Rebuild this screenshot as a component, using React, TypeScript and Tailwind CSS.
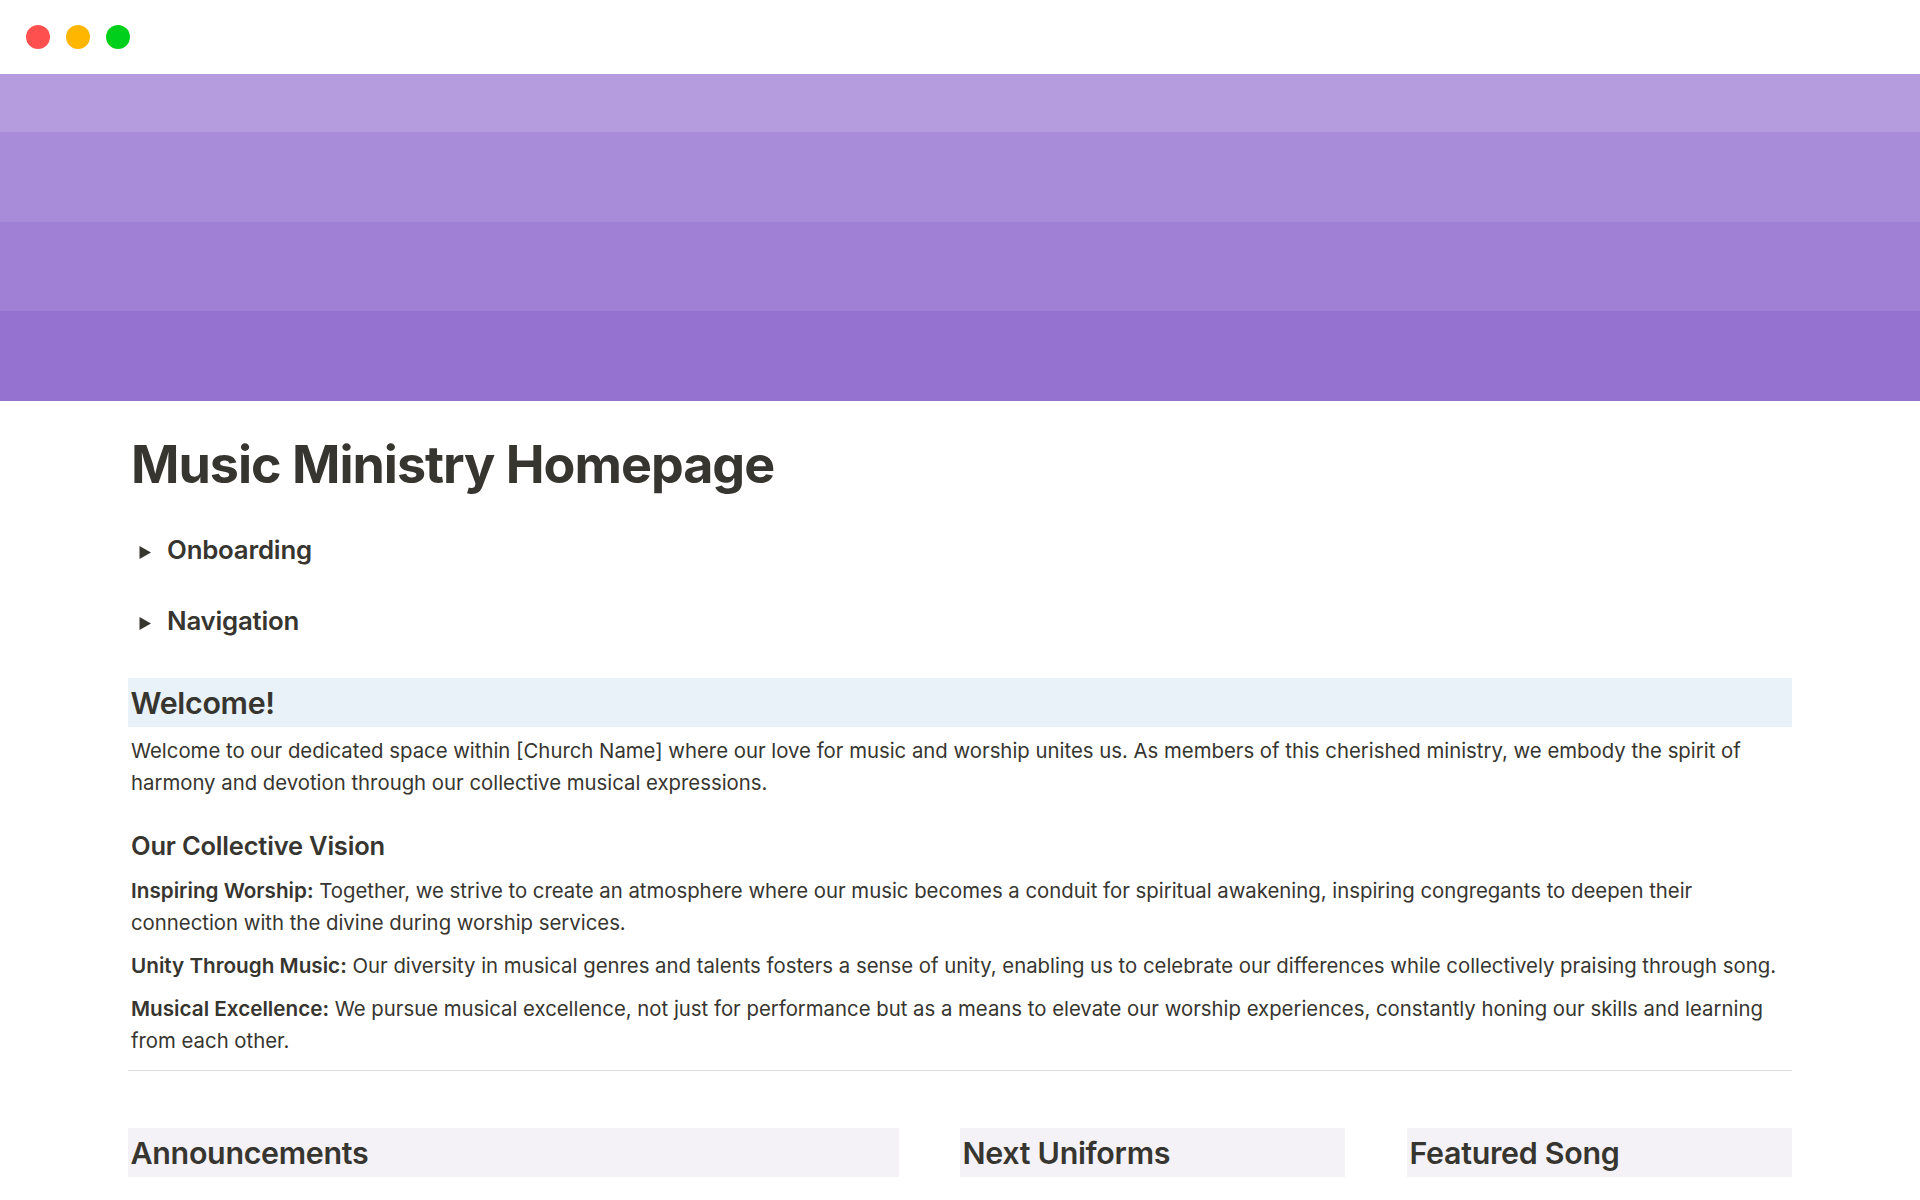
function Toggle({ label }: { label: string }) {
  return (
    <div className="flex items-center h-[36px]">
      <svg className="ml-[11px] mt-[8px] h-[13px] w-[12px] text-[#37352f]" viewBox="0 0 12 13" fill="currentColor">
        <path d="M0.5 0 L12 6.5 L0.5 13 Z" />
      </svg>
      <span className="ml-[16px] pt-[4px] text-[25.8px] font-semibold tracking-[-0.2px]">{label}</span>
    </div>
  );
}

function ColumnHeading({ title, className }: { title: string; className: string }) {
  return (
    <div className={`h-[49px] bg-[#f4f2f7] pl-[2.5px] pt-[2px] flex items-center text-[30.4px] font-semibold tracking-[-0.3px] ${className}`}>
      {title}
    </div>
  );
}

export default function App() {
  return (
    <div className="h-[1200px] overflow-hidden bg-white text-[#37352f] font-['Inter',sans-serif]">
      {/* Window dots */}
      <div className="h-[74px] flex items-center gap-4 pl-[26px]">
        <span className="h-6 w-6 rounded-full bg-[#ff5050]" />
        <span className="h-6 w-6 rounded-full bg-[#ffb600]" />
        <span className="h-6 w-6 rounded-full bg-[#00d01c]" />
      </div>

      {/* Banner */}
      <div>
        <div className="h-[58px] bg-[#b49cdf]" />
        <div className="h-[90px] bg-[#a88cd9]" />
        <div className="h-[89px] bg-[#a080d5]" />
        <div className="h-[90px] bg-[#9672d0]" />
      </div>

      <div className="px-[128px]">
        <h1 className="mt-[28px] pl-[3px] text-[52px] leading-[72px] font-bold tracking-[-1px]">
          Music Ministry Homepage
        </h1>

        <div className="mt-[29px] flex flex-col gap-[35px]">
          <Toggle label="Onboarding" />
          <Toggle label="Navigation" />
        </div>

        <div className="mt-[41px] h-[49px] bg-[#e9f2f8] pl-[2.5px] pt-[2px] flex items-center text-[30.4px] font-semibold tracking-[-0.3px]">
          Welcome!
        </div>

        <div className="pl-[3px] text-[20.34px] leading-[32px]">
          <p className="mt-[8px]">
            Welcome to our dedicated space within [Church Name] where our love for music and worship unites us. As members of this cherished ministry, we embody the spirit of harmony and devotion through our collective musical expressions.
          </p>

          <h3 className="mt-[29px] text-[25.5px] leading-[36px] font-semibold tracking-[-0.2px]">Our Collective Vision</h3>

          <p className="mt-[11px]">
            <b className="text-[20.7px] font-semibold">Inspiring Worship:</b> Together, we strive to create an atmosphere where our music becomes a conduit for spiritual awakening, inspiring congregants to deepen their connection with the divine during worship services.
          </p>
          <p className="mt-[11px]">
            <b className="text-[20.7px] font-semibold">Unity Through Music:</b> Our diversity in musical genres and talents fosters a sense of unity, enabling us to celebrate our differences while collectively praising through song.
          </p>
          <p className="mt-[11px]">
            <b className="text-[20.7px] font-semibold">Musical Excellence:</b> We pursue musical excellence, not just for performance but as a means to elevate our worship experiences, constantly honing our skills and learning from each other.
          </p>
        </div>

        <div className="mt-[13px] h-px bg-[#dcdcdc]" />

        <div className="mt-[57px] flex">
          <ColumnHeading title="Announcements" className="w-[771px]" />
          <ColumnHeading title="Next Uniforms" className="ml-[61px] w-[385px]" />
          <ColumnHeading title="Featured Song" className="ml-[62px] w-[385px]" />
        </div>
      </div>
    </div>
  );
}
